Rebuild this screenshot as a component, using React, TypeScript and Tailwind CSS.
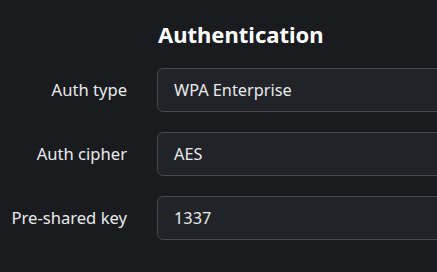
export default function App() {
    const rows = [
        { label: "Auth type", value: "WPA Enterprise" },
        { label: "Auth cipher", value: "AES" },
        { label: "Pre-shared key", value: "1337" },
    ];

    return (
        <div
            className="min-h-screen w-[437px] overflow-hidden bg-[#191b1f] text-[#e9eaec]"
            style={{ fontFamily: '"Noto Sans", "Open Sans", sans-serif' }}
        >
            <div className="grid grid-cols-[127px_1fr] gap-x-[30px] pt-[18px]">
                <div />
                <h2 className="text-[22px] font-bold leading-[32px] text-white pl-px">
                    Authentication
                </h2>
            </div>

            <div className="mt-[18px] space-y-[20px]">
                {rows.map((row) => (
                    <div
                        key={row.label}
                        className="grid grid-cols-[127px_1fr] items-center gap-x-[30px]"
                    >
                        <span className="text-right text-[16.6px]">{row.label}</span>
                        <div className="h-[44px] w-[320px] rounded-[6px] border border-[#45484e] bg-[#212328] px-4 flex items-center text-[16.3px]">
                            {row.value}
                        </div>
                    </div>
                ))}
            </div>
        </div>
    );
}
